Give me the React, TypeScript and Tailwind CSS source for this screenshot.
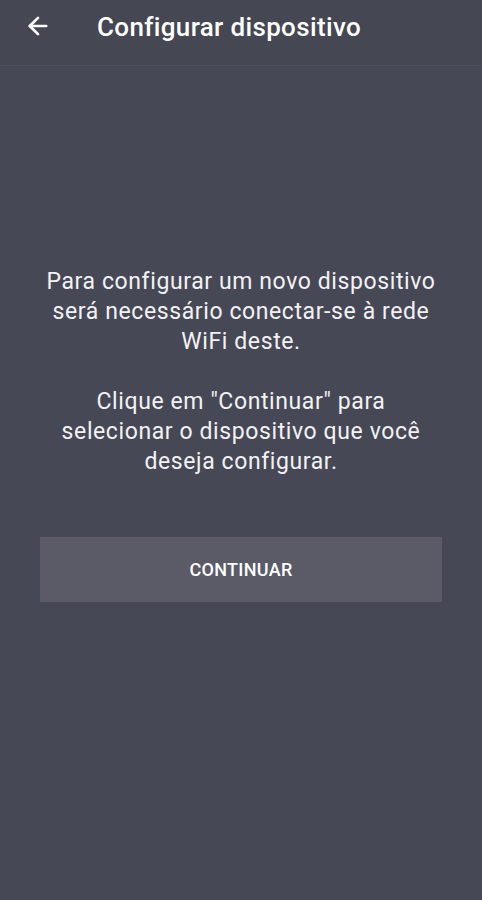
import { ArrowLeft } from 'lucide-react'

export default function App() {
	return (
		<div className="w-[482px] h-[900px] bg-[#464855] flex flex-col font-['Roboto',sans-serif] text-white">
			<div className="h-[66px] flex items-start pt-[11px] border-b border-[#4d4f5c] bg-[#454753]">
				<button className="w-[28px] h-[30px] ml-[24px] mr-[45px] flex items-center">
					<ArrowLeft size={28} strokeWidth={2.3} />
				</button>
				<h1 className="text-[26px] leading-[32px] font-medium tracking-[0.35px]">Configurar dispositivo</h1>
			</div>
			<div className="flex flex-col items-center px-[40px] pt-[201px]">
				<p className="text-[23px] leading-[30px] text-center text-[#f2f2f4] tracking-[0.6px] whitespace-nowrap">
					Para configurar um novo dispositivo
					<br />
					será necessário conectar-se à rede
					<br />
					WiFi deste.
				</p>
				<p className="text-[23px] leading-[30px] text-center text-[#f2f2f4] tracking-[0.6px] whitespace-nowrap mt-[30px]">
					Clique em "Continuar" para
					<br />
					selecionar o dispositivo que você
					<br />
					deseja configurar.
				</p>
				<button className="mt-[60px] w-full h-[65px] bg-[#5a5b67] text-[18px] font-medium tracking-[0.3px] uppercase">
					Continuar
				</button>
			</div>
		</div>
	)
}
